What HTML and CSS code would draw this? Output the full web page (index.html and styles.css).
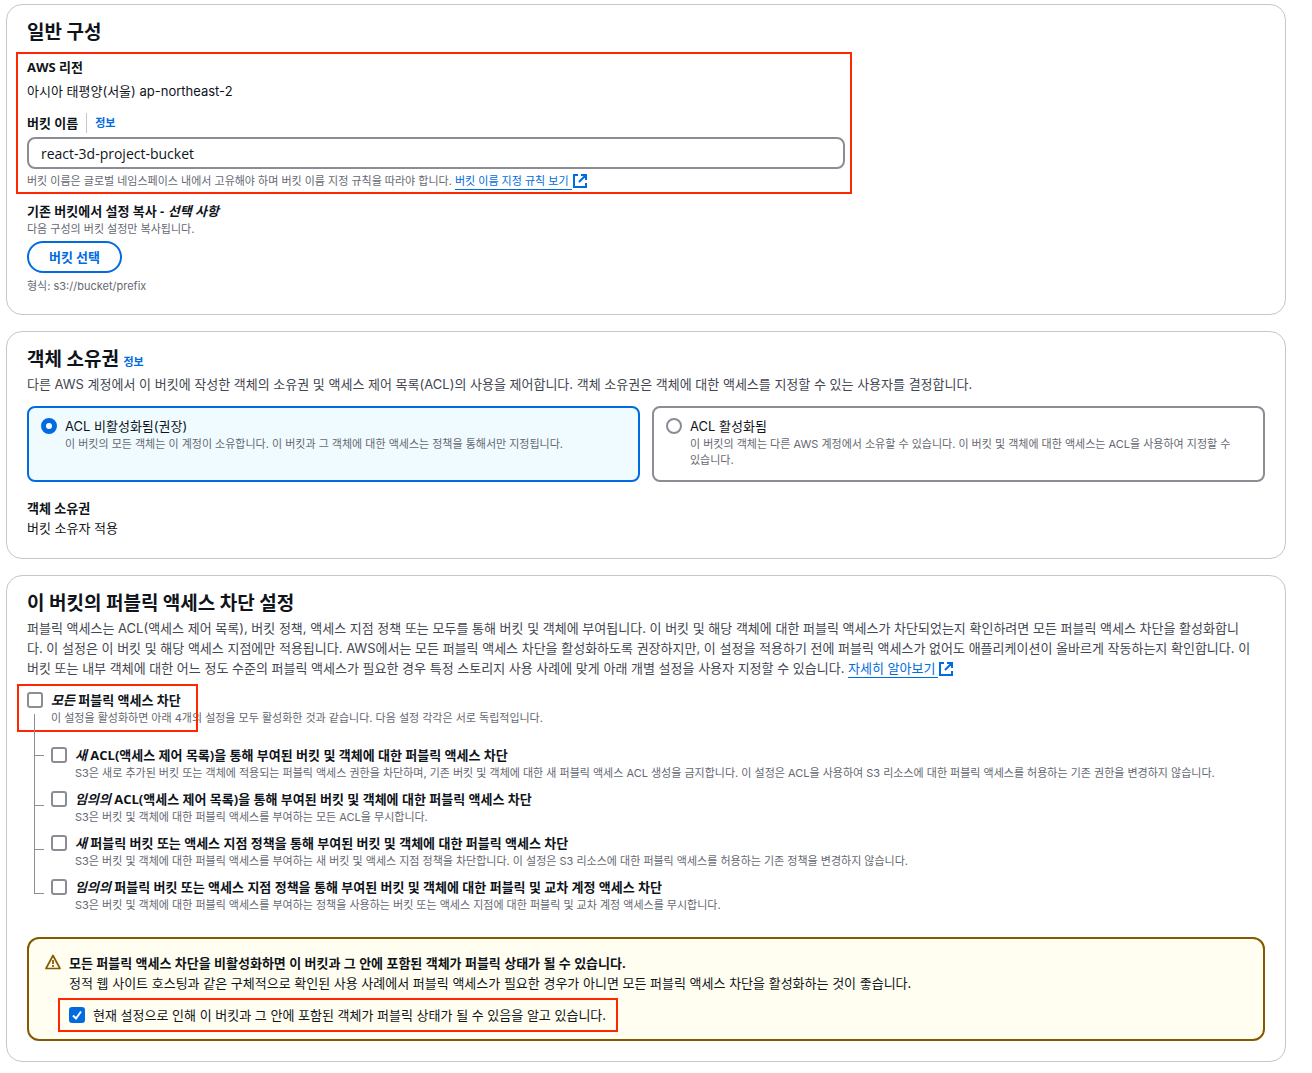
FILE: index.html
```
<!DOCTYPE html>
<html lang="ko">
  <head>
    <meta charset="UTF-8" />
    <meta name="viewport" content="width=device-width, initial-scale=1.0" />
    <title>버킷 만들기</title>
    <link rel="stylesheet" href="styles.css">
  </head>
  <body>
    <!-- General configuration -->
    <section class="card">
      <h2>일반 구성</h2>
      <div class="marked marked-region">
        <div class="label">AWS 리전</div>
        <div class="region">아시아 태평양(서울) ap-northeast-2</div>
        <div class="label-row">
          <label class="label" for="bucket-name">버킷 이름</label>
          <a href="#" class="info">정보</a>
        </div>
        <input type="text" class="text-input" id="bucket-name" value="react-3d-project-bucket" />
        <div class="hint">
          버킷 이름은 글로벌 네임스페이스 내에서 고유해야 하며 버킷 이름 지정 규칙을 따라야 합니다.
          <a href="#" class="link"><span>버킷 이름 지정 규칙 보기</span><svg class="external" viewBox="0 0 16 16"><path d="M6 2H2v12h12v-4M9 2h5v5M14 2L7 9" /></svg></a>
        </div>
      </div>
      <div class="label">기존 버킷에서 설정 복사 - <em>선택 사항</em></div>
      <div class="hint">다음 구성의 버킷 설정만 복사됩니다.</div>
      <button class="button" type="button">버킷 선택</button>
      <div class="hint">형식: s3://bucket/prefix</div>
    </section>

    <!-- Object ownership -->
    <section class="card">
      <h2>객체 소유권 <a href="#" class="info">정보</a></h2>
      <p class="description">다른 AWS 계정에서 이 버킷에 작성한 객체의 소유권 및 액세스 제어 목록(ACL)의 사용을 제어합니다. 객체 소유권은 객체에 대한 액세스를 지정할 수 있는 사용자를 결정합니다.</p>
      <div class="tiles">
        <label class="tile">
          <input type="radio" name="acl" checked />
          <span>
            <span class="option-title">ACL 비활성화됨(권장)</span>
            <span class="hint">이 버킷의 모든 객체는 이 계정이 소유합니다. 이 버킷과 그 객체에 대한 액세스는 정책을 통해서만 지정됩니다.</span>
          </span>
        </label>
        <label class="tile">
          <input type="radio" name="acl" />
          <span>
            <span class="option-title">ACL 활성화됨</span>
            <span class="hint">이 버킷의 객체는 다른 AWS 계정에서 소유할 수 있습니다. 이 버킷 및 객체에 대한 액세스는 ACL을 사용하여 지정할 수 있습니다.</span>
          </span>
        </label>
      </div>
      <div class="label">객체 소유권</div>
      <div>버킷 소유자 적용</div>
    </section>

    <!-- Block public access -->
    <section class="card">
      <h2>이 버킷의 퍼블릭 액세스 차단 설정</h2>
      <p class="description">
        퍼블릭 액세스는 ACL(액세스 제어 목록), 버킷 정책, 액세스 지점 정책 또는 모두를 통해 버킷 및 객체에 부여됩니다. 이 버킷 및 해당 객체에 대한 퍼블릭 액세스가 차단되었는지 확인하려면 모든 퍼블릭 액세스 차단을 활성화합니<br>다. 이 설정은 이 버킷 및 해당 액세스 지점에만 적용됩니다. AWS에서는 모든 퍼블릭 액세스 차단을 활성화하도록 권장하지만, 이 설정을 적용하기 전에 퍼블릭 액세스가 없어도 애플리케이션이 올바르게 작동하는지 확인합니다. 이<br>버킷 또는 내부 객체에 대한 어느 정도 수준의 퍼블릭 액세스가 필요한 경우 특정 스토리지 사용 사례에 맞게 아래 개별 설정을 사용자 지정할 수 있습니다.
        <a href="#" class="link"><span>자세히 알아보기</span><svg class="external" viewBox="0 0 16 16"><path d="M6 2H2v12h12v-4M9 2h5v5M14 2L7 9" /></svg></a>
      </p>

      <div class="block-all">
        <label class="check">
          <input type="checkbox" />
          <span>
            <span class="option-title label"><em>모든</em> 퍼블릭 액세스 차단</span>
            <span class="hint">이 설정을 활성화하면 아래 4개의 설정을 모두 활성화한 것과 같습니다. 다음 설정 각각은 서로 독립적입니다.</span>
          </span>
        </label>
      </div>
      <ul class="block-list">
        <li>
          <label class="check">
            <input type="checkbox" />
            <span>
              <span class="option-title label"><em>새</em> ACL(액세스 제어 목록)을 통해 부여된 버킷 및 객체에 대한 퍼블릭 액세스 차단</span>
              <span class="hint">S3은 새로 추가된 버킷 또는 객체에 적용되는 퍼블릭 액세스 권한을 차단하며, 기존 버킷 및 객체에 대한 새 퍼블릭 액세스 ACL 생성을 금지합니다. 이 설정은 ACL을 사용하여 S3 리소스에 대한 퍼블릭 액세스를 허용하는 기존 권한을 변경하지 않습니다.</span>
            </span>
          </label>
        </li>
        <li>
          <label class="check">
            <input type="checkbox" />
            <span>
              <span class="option-title label"><em>임의의</em> ACL(액세스 제어 목록)을 통해 부여된 버킷 및 객체에 대한 퍼블릭 액세스 차단</span>
              <span class="hint">S3은 버킷 및 객체에 대한 퍼블릭 액세스를 부여하는 모든 ACL을 무시합니다.</span>
            </span>
          </label>
        </li>
        <li>
          <label class="check">
            <input type="checkbox" />
            <span>
              <span class="option-title label"><em>새</em> 퍼블릭 버킷 또는 액세스 지점 정책을 통해 부여된 버킷 및 객체에 대한 퍼블릭 액세스 차단</span>
              <span class="hint">S3은 버킷 및 객체에 대한 퍼블릭 액세스를 부여하는 새 버킷 및 액세스 지점 정책을 차단합니다. 이 설정은 S3 리소스에 대한 퍼블릭 액세스를 허용하는 기존 정책을 변경하지 않습니다.</span>
            </span>
          </label>
        </li>
        <li>
          <label class="check">
            <input type="checkbox" />
            <span>
              <span class="option-title label"><em>임의의</em> 퍼블릭 버킷 또는 액세스 지점 정책을 통해 부여된 버킷 및 객체에 대한 퍼블릭 및 교차 계정 액세스 차단</span>
              <span class="hint">S3은 버킷 및 객체에 대한 퍼블릭 액세스를 부여하는 정책을 사용하는 버킷 또는 액세스 지점에 대한 퍼블릭 및 교차 계정 액세스를 무시합니다.</span>
            </span>
          </label>
        </li>
      </ul>

      <div class="alert">
        <svg class="warning" viewBox="0 0 16 16"><path d="M8 1.5L15 14.5H1z" /><path d="M8 6v4M8 11v2" /></svg>
        <div>
          <div class="label">모든 퍼블릭 액세스 차단을 비활성화하면 이 버킷과 그 안에 포함된 객체가 퍼블릭 상태가 될 수 있습니다.</div>
          <div>정적 웹 사이트 호스팅과 같은 구체적으로 확인된 사용 사례에서 퍼블릭 액세스가 필요한 경우가 아니면 모든 퍼블릭 액세스 차단을 활성화하는 것이 좋습니다.</div>
          <label class="check marked marked-confirm">
            <input type="checkbox" checked />
            <span>현재 설정으로 인해 이 버킷과 그 안에 포함된 객체가 퍼블릭 상태가 될 수 있음을 알고 있습니다.</span>
          </label>
        </div>
      </div>
    </section>
  </body>
</html>
```
FILE: styles.css
```
*,
*::before,
*::after {
  box-sizing: border-box;
}

body {
  margin: 0;
  padding: 4px 26px 11px 6px;
  background-color: #fff;
  color: #0f141a;
  font-family: Inter, "Noto Sans CJK KR", sans-serif;
  font-size: 13px;
  line-height: 20px;
  display: flex;
  flex-direction: column;
  gap: 16px;
}

a {
  color: #006ce0;
  text-decoration: none;
}

/* Cards */
.card {
  border: 1px solid #c6c6cd;
  border-radius: 16px;
  padding: 16px 20px 20px;
}

.card h2 {
  margin: 0;
  font-size: 19px;
  line-height: 24px;
}

.description {
  margin: 2px 0 12px;
  color: #424650;
}

.label {
  font-family: "Open Sans", "Noto Sans CJK KR", sans-serif;
  font-weight: 700;
}

.hint {
  display: block;
  color: #656871;
  font-size: 11px;
  line-height: 16px;
  word-break: keep-all;
}

.info {
  font-size: 11px;
  font-weight: 700;
}

h2 .info {
  line-height: 16px;
}

.link span {
  padding: 0 3px 1px 0;
  border-bottom: 1px solid #006ce0;
}

.external {
  width: 16px;
  height: 16px;
  vertical-align: -4px;
  fill: none;
  stroke: #006ce0;
  stroke-width: 2;
}

/* Red frames around the fields to fill in */
.marked {
  border: 2px solid #ff2600;
}

.marked-region {
  width: 67.5%;
  margin: 7px 0 7px -11px;
  padding: 3px 5px 3px 9px;
}

.region {
  margin: 4px 0 12px;
}

.label-row {
  display: flex;
  gap: 8px;
  margin-bottom: 4px;
}

.label-row .info {
  border-left: 1px solid #c6c6cd;
  padding-left: 8px;
}

.text-input {
  display: block;
  width: 100%;
  height: 32px;
  margin-bottom: 4px;
  padding: 0 12px;
  border: 2px solid #8c8c94;
  border-radius: 8px;
  color: #0f141a;
  font-family: "Open Sans", "Noto Sans CJK KR", sans-serif;
  font-size: 14px;
}

.button {
  display: block;
  height: 32px;
  margin: 4px 0 5px;
  padding: 0 20px;
  border: 2px solid #006ce0;
  border-radius: 20px;
  background-color: #fff;
  color: #006ce0;
  font: inherit;
  font-weight: 700;
}

/* Radio buttons and checkboxes */
input[type="radio"],
input[type="checkbox"] {
  appearance: none;
  flex: none;
  width: 16px;
  height: 16px;
  margin: 2px 0 0;
  border: 2px solid #8c8c94;
  border-radius: 3px;
  background-color: #fff;
}

input[type="radio"] {
  border-radius: 50%;
}

input[type="radio"]:checked {
  border: 5px solid #006ce0;
}

input[type="checkbox"]:checked {
  border-color: #006ce0;
  background: #006ce0 url("data:image/svg+xml,%3Csvg xmlns='http://www.w3.org/2000/svg' viewBox='0 0 12 12'%3E%3Cpath d='M2 6.5L5 9.5L10 2.5' fill='none' stroke='white' stroke-width='2'/%3E%3C/svg%3E") center / 12px no-repeat;
}

.option-title {
  display: block;
}

.tiles {
  display: grid;
  grid-template-columns: 1fr 1fr;
  gap: 12px;
  margin-bottom: 16px;
}

.tile {
  display: flex;
  gap: 8px;
  padding: 8px 12px 12px;
  border: 2px solid #8c8c94;
  border-radius: 8px;
}

.tile:has(input:checked) {
  border-color: #006ce0;
  background-color: #f0fbff;
}

.check {
  display: flex;
  gap: 8px;
}

.block-all {
  position: relative;
}

.block-all::after {
  content: "";
  position: absolute;
  top: -6px;
  left: -10px;
  width: 181px;
  height: 48px;
  border: 2px solid #ff2600;
}

.block-list {
  list-style: none;
  margin: 19px 0 24px;
  padding-left: 24px;
  display: flex;
  flex-direction: column;
  gap: 8px;
}

.block-list li {
  position: relative;
}

/* Tree lines from the parent checkbox */
.block-list li::before {
  content: "";
  position: absolute;
  top: -34px;
  left: -17px;
  width: 10px;
  height: 51px;
  border: solid #8c8c94;
  border-width: 0 0 1px 1px;
}

.block-list li:first-child::before {
  top: -31px;
  height: 42px;
}

/* Warning */
.alert {
  display: flex;
  gap: 8px;
  padding: 14px 16px 7px;
  border: 2px solid #855900;
  border-radius: 12px;
  background-color: #fffef0;
}

.warning {
  flex: none;
  width: 16px;
  height: 16px;
  margin-top: 1px;
  fill: none;
  stroke: #855900;
  stroke-width: 1.7;
  stroke-linejoin: round;
}

.marked-confirm {
  width: fit-content;
  margin: 5px 0 0 -11px;
  padding: 5px 10px 5px 9px;
}
```
